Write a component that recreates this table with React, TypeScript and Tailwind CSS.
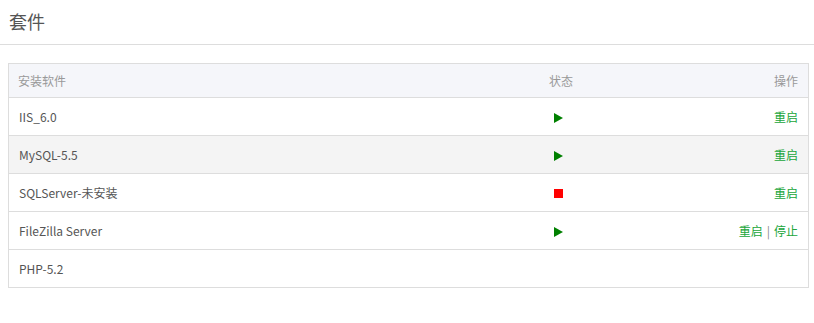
import React from 'react';

type Soft = {
  name: string;
  status: 'run' | 'stop' | 'none';
  actions: string[];
  hover?: boolean;
};

const softs: Soft[] = [
  { name: 'IIS_6.0', status: 'run', actions: ['重启'] },
  { name: 'MySQL-5.5', status: 'run', actions: ['重启'], hover: true },
  { name: 'SQLServer-未安装', status: 'stop', actions: ['重启'] },
  { name: 'FileZilla Server', status: 'run', actions: ['重启', '停止'] },
  { name: 'PHP-5.2', status: 'none', actions: [] },
];

function StatusIcon({ status }: { status: Soft['status'] }) {
  if (status === 'run') {
    return (
      <svg width="9" height="10" viewBox="0 0 9 10" className="ml-[5px]">
        <polygon points="0,0 9,5 0,10" fill="#008000" />
      </svg>
    );
  }
  if (status === 'stop') {
    return <span className="ml-[5px] block w-[9px] h-[9px] bg-[#ff0000]" />;
  }
  return null;
}

export default function App() {
  return (
    <div className="w-[814px] h-[323px] bg-white text-[12px] text-[#666] font-['Noto_Sans_CJK_SC','Noto_Sans',sans-serif]">
      <div className="h-[45px] border-b border-[#ddd] pl-[9px] pb-[3px] flex items-center">
        <h2 className="text-[18px] text-[#555] font-normal leading-none">套件</h2>
      </div>

      <div className="mt-[18px] ml-[8px] w-[801px] border border-[#ddd]">
        <div className="grid grid-cols-[531px_120px_1fr] h-[34px] items-center bg-[#f5f6fa] border-b border-[#ddd] text-[#999]">
          <div className="pl-[9px]">安装软件</div>
          <div className="pl-[9px]">状态</div>
          <div className="text-right pr-[10px]">操作</div>
        </div>
        {softs.map((s, i) => (
          <div
            key={s.name}
            className={`grid grid-cols-[531px_120px_1fr] items-center ${
              i < softs.length - 1 ? 'h-[38px] border-b border-[#ddd]' : 'h-[37px]'
            } ${s.hover ? 'bg-[#f4f4f4]' : 'bg-white'}`}
          >
            <div className="pl-[10px] text-[#555]">{s.name}</div>
            <div className="pl-[9px] flex items-center pt-[2px]">
              <StatusIcon status={s.status} />
            </div>
            <div className="text-right pr-[10px]">
              {s.actions.map((a, j) => (
                <span key={a}>
                  {j > 0 && <span className="text-[#888] mx-[4px]">|</span>}
                  <a className="text-[#20a53a] cursor-pointer">{a}</a>
                </span>
              ))}
            </div>
          </div>
        ))}
      </div>
    </div>
  );
}
